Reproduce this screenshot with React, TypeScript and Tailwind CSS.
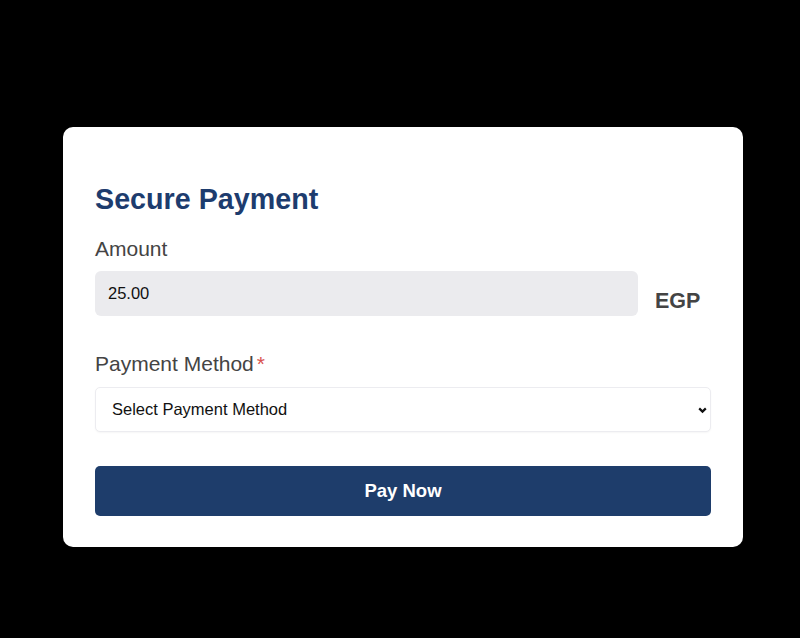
import { useState } from 'react';

export default function App() {
  const [amount, setAmount] = useState('25.00');
  const [method, setMethod] = useState('');

  return (
    <div className="min-h-[638px] w-full bg-black pt-[127px] pl-[63px] font-['Liberation_Sans',Arial,sans-serif]">
      <div className="w-[680px] rounded-[10px] bg-white px-8 pt-[56px] pb-[31px]">
        <h1 className="text-[28.7px] leading-[32px] font-bold text-[#1d3c6e]">Secure Payment</h1>

        <label className="mt-[22px] block text-[21px] leading-[24px] text-[#444]">Amount</label>
        <div className="mt-[10px] flex items-start">
          <input
            value={amount}
            onChange={(e) => setAmount(e.target.value)}
            className="h-[45px] w-[543px] rounded-[6px] bg-[#ebebee] px-[13px] text-[16.5px] text-[#111] outline-none"
          />
          <span className="mt-[18px] ml-[17px] text-[21.5px] leading-[24px] font-bold text-[#444]">EGP</span>
        </div>

        <label className="mt-[36px] block text-[21px] leading-[24px] text-[#444]">
          Payment Method<span className="ml-[3px] text-[#d9534f]">*</span>
        </label>
        <div className="relative mt-[11px]">
          <select
            value={method}
            onChange={(e) => setMethod(e.target.value)}
            className="h-[45px] w-full appearance-none rounded-[5px] border border-[#ececf0] bg-white px-[16px] text-[16.5px] text-[#111] shadow-[0_1px_2px_rgba(0,0,0,0.04)] outline-none"
          >
            <option value="">Select Payment Method</option>
            <option value="card">Credit Card</option>
            <option value="wallet">Mobile Wallet</option>
          </select>
          <svg
            className="pointer-events-none absolute top-1/2 right-[3px] h-[11px] w-[11px] -translate-y-1/2"
            viewBox="0 0 10 10"
            fill="none"
            stroke="#111"
            strokeWidth="2"
          >
            <path d="M2 3.5 5 6.5 8 3.5" />
          </svg>
        </div>

        <button className="mt-[34px] h-[50px] w-full rounded-[5px] bg-[#1e3d6b] text-[18.5px] font-bold text-white">
          Pay Now
        </button>
      </div>
    </div>
  );
}
